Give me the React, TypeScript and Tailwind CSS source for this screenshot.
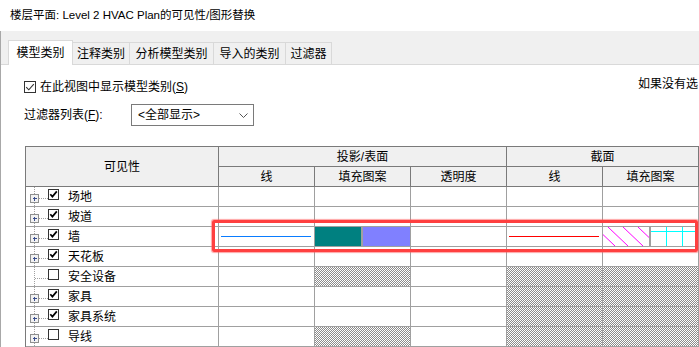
import React from "react";

type Row = {
  name: string;
  plus: boolean;
  checked: boolean;
  wall?: boolean;
  hatch?: number[];
};

const rows: Row[] = [
  { name: "场地", plus: true, checked: true },
  { name: "坡道", plus: true, checked: true },
  { name: "墙", plus: true, checked: true, wall: true },
  { name: "天花板", plus: true, checked: true },
  { name: "安全设备", plus: false, checked: false, hatch: [2, 4, 5] },
  { name: "家具", plus: true, checked: true, hatch: [4, 5] },
  { name: "家具系统", plus: true, checked: true, hatch: [4, 5] },
  { name: "导线", plus: true, checked: false, hatch: [2, 4, 5] },
];

const tabs = [
  { label: "注释类别", w: "w-[57px]" },
  { label: "分析模型类别", w: "w-[84px]" },
  { label: "导入的类别", w: "w-[72px]" },
  { label: "过滤器", w: "w-[46px]" },
];

const headCell = "bg-[#f0f0f0] border-r border-b border-[#7a7a7a] h-[20px] flex items-center justify-center";
const dataCell = "border-r border-b border-[#a0a0a0] h-[20px]";
const hatchBg = "bg-[image:repeating-conic-gradient(#8c8c8c_0%_25%,#ffffff_0%_50%)] bg-[length:2px_2px]";

export default function App() {
  return (
    <div className="relative w-[699px] h-[347px] overflow-hidden bg-white text-[12px] text-black font-['Liberation_Sans','Noto_Sans_CJK_SC',sans-serif]">
      {/* TITLE */}
      <div className="h-[31px] flex items-center pl-[10px] text-[11.5px]">楼层平面: Level 2 HVAC Plan的可见性/图形替换</div>

      <div className="border-l border-[#a8a8a8] h-[316px]">
        {/* TABS */}
        <div className="h-[34px] bg-[#f0f0f0] border-b border-[#d9d9d9] flex items-end pl-[7px]">
          <div className="w-[65px] h-[25px] -mb-px bg-white border border-b-0 border-[#d9d9d9] flex items-center justify-center relative">
            模型类别
          </div>
          {tabs.map((t) => (
            <div key={t.label} className={`${t.w} h-[22px] border-t border-r border-[#d9d9d9] flex items-center justify-center`}>
              {t.label}
            </div>
          ))}
        </div>

        {/* PANEL */}
        <div className="pt-[16px] pl-[23px]">
          <div className="flex items-center h-[12px]">
            <span className="w-[12px] h-[12px] border border-[#333] bg-white flex items-center justify-center shrink-0">
              <svg width="10" height="10" viewBox="0 0 10 10">
                <path d="M1.2 5.2l2.6 2.6L8.8 2.2" stroke="#333" strokeWidth="1.1" fill="none" />
              </svg>
            </span>
            <span className="ml-[4px]">
              在此视图中显示模型类别(<span className="underline">S</span>)
            </span>
            <span className="ml-auto w-[61px] whitespace-nowrap overflow-hidden mb-[7px]">如果没有选</span>
          </div>

          <div className="mt-[11px] flex items-center h-[22px]">
            <span className="w-[107px]">
              过滤器列表(<span className="underline">F</span>):
            </span>
            <div className="w-[123px] h-[22px] border border-[#7a7a7a] flex items-center pl-[6px] pr-[5px]">
              <span>&lt;全部显示&gt;</span>
              <svg width="9" height="5" viewBox="0 0 9 5" className="ml-auto">
                <path d="M0.5 0.5l4 4 4-4" stroke="#555" fill="none" />
              </svg>
            </div>
          </div>

          {/* TABLE */}
          <div className="mt-[20px] ml-[1px] grid grid-cols-[193px_96px_96px_96px_96px_96px] border-l border-t border-[#7a7a7a]">
            <div className={`${headCell} row-span-2 h-[40px]`}>可见性</div>
            <div className={`${headCell} col-span-3`}>投影/表面</div>
            <div className={`${headCell} col-span-2`}>截面</div>
            <div className={headCell}>线</div>
            <div className={headCell}>填充图案</div>
            <div className={headCell}>透明度</div>
            <div className={headCell}>线</div>
            <div className={headCell}>填充图案</div>

            {rows.map((r) => (
              <React.Fragment key={r.name}>
                <div className={`${dataCell} flex items-center`}>
                  <TreeGlyph plus={r.plus} />
                  <TreeCheck checked={r.checked} />
                  <span className="ml-[9px]">{r.name}</span>
                </div>
                {[1, 2, 3, 4, 5].map((c) => (
                  <div key={c} className={`${dataCell} ${r.hatch?.includes(c) ? hatchBg : ""} flex`}>
                    {r.wall && <WallCell col={c} />}
                  </div>
                ))}
              </React.Fragment>
            ))}
          </div>
        </div>
      </div>

      {/* HIGHLIGHT */}
      <div className="absolute left-[212px] top-[220px] w-[486px] h-[32px] border-[3px] border-[#ff4040] rounded-[2px] shadow-[0_0_1px_1px_rgba(255,90,90,0.55)]" />
    </div>
  );
}

function WallCell({ col }: { col: number }) {
  if (col === 1)
    return (
      <div className="flex-1 flex items-center pl-[2px] pr-[3px]">
        <div className="h-px w-full bg-[#0a7cff]" />
      </div>
    );
  if (col === 2)
    return (
      <div className="flex-1 flex">
        <div className="w-[46px] bg-[#008080]" />
        <div className="w-[2px] bg-[#a0a0a0]" />
        <div className="flex-1 bg-[#8080ff]" />
      </div>
    );
  if (col === 4)
    return (
      <div className="flex-1 flex items-center pl-[2px] pr-[3px]">
        <div className="h-px w-full bg-[#ff0000]" />
      </div>
    );
  if (col === 5)
    return (
      <div className="flex-1 flex">
        <svg width="46" height="19" viewBox="0 0 46 19" className="shrink-0">
          {[-8, 5, 20, 35].map((x) => (
            <line key={x} x1={x} y1="0" x2={x + 20} y2="19" stroke="#ff00ff" strokeWidth="1" />
          ))}
        </svg>
        <div className="w-[2px] bg-[#a0a0a0]" />
        <svg width="47" height="19" viewBox="0 0 47 19" className="shrink-0" shapeRendering="crispEdges">
          <line x1="0" y1="4.5" x2="47" y2="4.5" stroke="#00ffff" />
          <line x1="15.5" y1="0" x2="15.5" y2="19" stroke="#00ffff" />
          <line x1="31.5" y1="0" x2="31.5" y2="19" stroke="#00ffff" />
        </svg>
      </div>
    );
  return null;
}

function TreeGlyph({ plus }: { plus: boolean }) {
  return (
    <svg width="22" height="19" viewBox="0 0 22 19" className="shrink-0" shapeRendering="crispEdges">
      <line x1="8.5" y1="0" x2="8.5" y2="19" stroke="#a0a0a0" strokeDasharray="1 1" />
      <line x1={plus ? 13 : 9} y1="11.5" x2="22" y2="11.5" stroke="#a0a0a0" strokeDasharray="1 1" />
      {plus && (
        <>
          <rect x="4.5" y="7.5" width="8" height="8" fill="#f2f2f2" stroke="#8e8f8f" />
          <path d="M6.5 11.5h4M8.5 9.5v4" stroke="#394d8c" />
        </>
      )}
    </svg>
  );
}

function TreeCheck({ checked }: { checked: boolean }) {
  return (
    <span className="self-start mt-[2px] w-[11px] h-[11px] border border-[#333] bg-white shrink-0 flex items-center justify-center">
      {checked && (
        <svg width="9" height="9" viewBox="0 0 9 9">
          <path d="M1.3 4.2l2.1 2.4L7.8 1.4" stroke="#000" strokeWidth="1.7" fill="none" />
        </svg>
      )}
    </span>
  );
}
